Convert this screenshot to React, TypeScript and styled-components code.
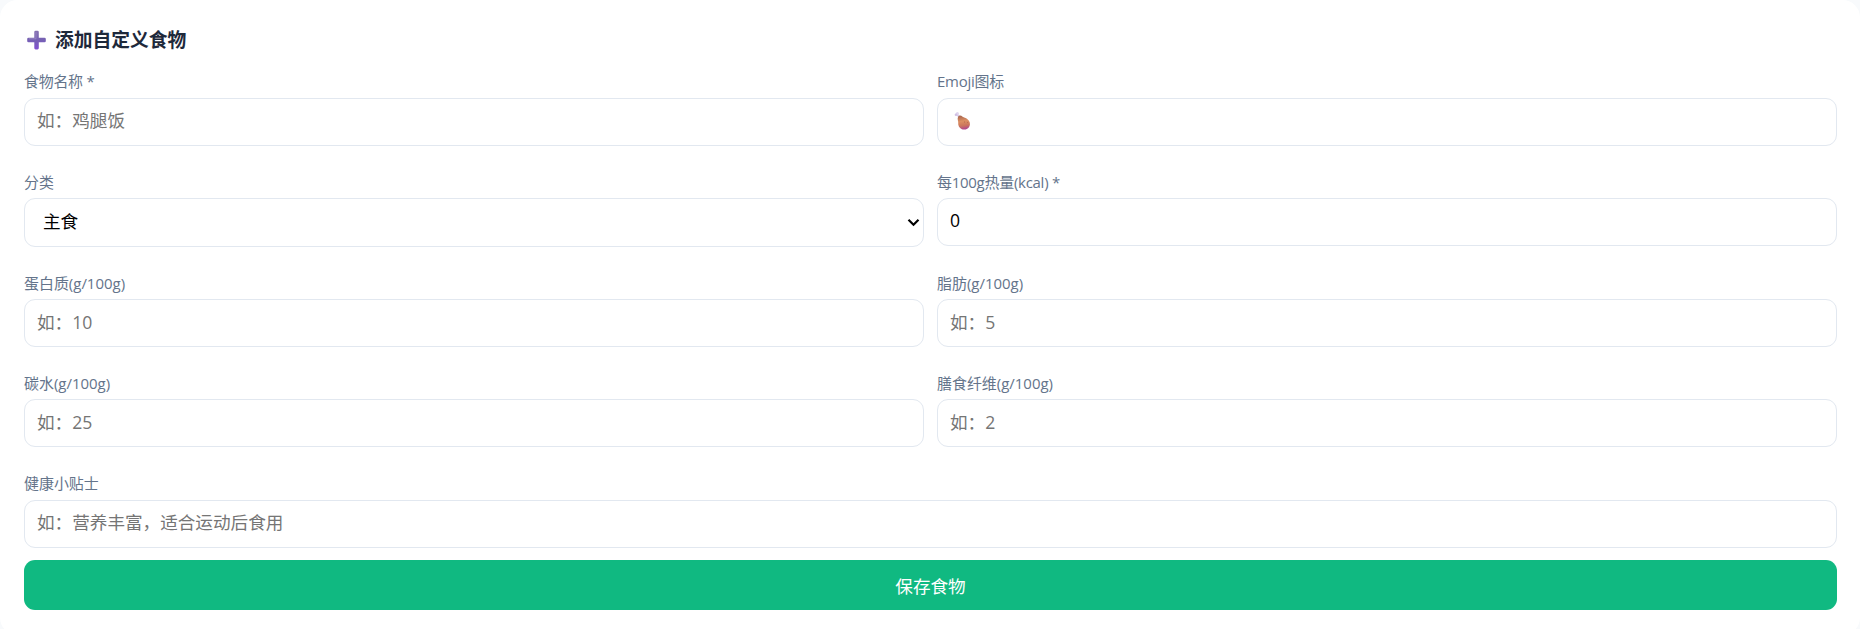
import * as React from "react";
import styled, { createGlobalStyle } from "styled-components";

interface FieldProps {
  label: string;
  tight?: boolean;
  wide?: boolean;
  low?: boolean;
  children: React.ReactNode;
}

const fontStack = `"Open Sans", "Noto Sans CJK SC", sans-serif`;

const GlobalStyle = createGlobalStyle`
  * {
    box-sizing: border-box;
  }
  body {
    margin: 0;
    background: #f8fafc;
    font-family: ${fontStack};
  }
`;

const Page = styled.main`
  height: 629px;
  overflow: hidden;
`;

const Card = styled.section`
  height: 635px;
  padding: 24px 23px 24px 24px;
  border-radius: 17.6px;
  background: #ffffff;
`;

const Title = styled.h3`
  display: flex;
  align-items: center;
  gap: 9px;
  height: 32px;
  margin: 0 0 12px;
  padding-left: 3px;
  color: #1e293b;
  font-size: 18.75px;
  font-weight: 700;
  line-height: 32px;
`;

const Form = styled.form`
  display: grid;
  grid-template-columns: 1fr 1fr;
  grid-template-rows: 100px 101px 100px 101px 90px 50px;
  column-gap: 13px;
`;

const Field_wrapper = styled.div<{ $wide?: boolean }>`
  display: flex;
  flex-direction: column;
  grid-column: ${p => (p.$wide ? "1 / -1" : "auto")};
`;

const Field_label = styled.label<{ $tight?: boolean; $low?: boolean }>`
  height: 30px;
  color: #64748b;
  font-size: 14.96px;
  line-height: ${p => (p.$low ? "28px" : "26px")};
  letter-spacing: ${p => (p.$tight ? "-0.25px" : "normal")};
`;

const Input = styled.input`
  width: 100%;
  height: 48px;
  padding: 0 12px 4px;
  border: 1px solid #e2e8f0;
  border-radius: 11px;
  outline: none;
  background: #ffffff;
  color: #000000;
  font-family: ${fontStack};
  font-size: 17.6px;
  &::placeholder {
    color: #757575;
  }
  &[type="number"]:placeholder-shown {
    padding-bottom: 2px;
  }
`;

const EmojiBox = styled.div`
  display: flex;
  align-items: center;
  height: 48px;
  padding: 0 16px 2px;
  border: 1px solid #e2e8f0;
  border-radius: 11px;
`;

const SelectBox = styled.div`
  display: flex;
  align-items: center;
  height: 49px;
  padding-right: 3px;
  border: 1px solid #e2e8f0;
  border-radius: 11px;
`;

const Select = styled.select`
  flex: 1;
  height: 100%;
  padding: 0 0 4px 18px;
  appearance: none;
  border: none;
  outline: none;
  background: transparent;
  color: #000000;
  font-family: ${fontStack};
  font-size: 17.6px;
`;

const SaveButton = styled.button`
  grid-column: 1 / -1;
  padding: 1px 0 0;
  border: none;
  border-radius: 11px;
  background: #10b981;
  color: #ffffff;
  font-family: ${fontStack};
  font-size: 17.6px;
  font-weight: 400;
`;

const PlusIcon = () => (
  <svg width="19" height="20" viewBox="0 0 19 20">
    <defs>
      <linearGradient id="plus" x1="0" y1="0" x2="0" y2="1">
        <stop offset="0" stopColor="#8571b0" />
        <stop offset="0.5" stopColor="#7560b3" />
        <stop offset="1" stopColor="#8251d2" />
      </linearGradient>
    </defs>
    <path
      d="M8.6.7h1.9q1.3 0 1.3 1.3v5.7h5.7q1.3 0 1.3 1.3v1.9q0 1.3-1.3 1.3h-5.7v5.9q0 1.3-1.3 1.3H8.6q-1.3 0-1.3-1.3v-5.9H1.5q-1.3 0-1.3-1.3V9q0-1.3 1.3-1.3h5.8V2q0-1.3 1.3-1.3Z"
      fill="url(#plus)"
    />
    <path d="M9 2v6.8H2" fill="none" stroke="#9c8bc4" strokeWidth=".8" />
  </svg>
);

const DrumstickIcon = () => (
  <svg width="18" height="20" viewBox="0 0 18 20">
    <defs>
      <linearGradient id="meat" x1="0.3" y1="0" x2="0.45" y2="1">
        <stop offset="0" stopColor="#a9674f" />
        <stop offset="0.4" stopColor="#dc8f63" />
        <stop offset="0.72" stopColor="#cb765c" />
        <stop offset="1" stopColor="#b04592" />
      </linearGradient>
    </defs>
    <path d="M3 3.5 5.5 6" stroke="#d9cbe8" strokeWidth="2" />
    <circle cx="3.4" cy="2.4" r="1.5" fill="#dfd4ee" />
    <circle cx="2" cy="3.7" r="1.3" fill="#cfc0e5" />
    <path
      d="M4.2 5.4C5.6 4 7.3 4.7 8.6 5.8c1.2 1 3.2 1.1 4.9 2.4 2.3 1.8 3.1 4.6 2 7-1.2 2.8-4.7 4.1-7.6 3C5.1 17.1 3.9 14.3 4.2 11.6 4.4 9.7 2.9 7.6 4.2 5.4Z"
      fill="url(#meat)"
    />
    <path d="M10 11h1M13 11.5h.8" stroke="#a95e45" strokeWidth=".7" />
  </svg>
);

const Chevron = () => (
  <svg width="13" height="9" viewBox="0 0 13 9" fill="none">
    <path d="M1.5 1.7 6.5 6.7 11.5 1.7" stroke="#000000" strokeWidth="2.2" />
  </svg>
);

const Field = ({ label, tight, wide, low, children }: FieldProps) => (
  <Field_wrapper $wide={wide}>
    <Field_label $tight={tight} $low={low}>
      {label}
    </Field_label>
    {children}
  </Field_wrapper>
);

const App = () => (
  <>
    <GlobalStyle />
    <Page>
      <Card>
        <Title>
          <PlusIcon />
          添加自定义食物
        </Title>
        <Form onSubmit={e => e.preventDefault()}>
          <Field label="食物名称 *" tight>
            <Input placeholder="如：鸡腿饭" />
          </Field>
          <Field label="Emoji图标" tight>
            <EmojiBox>
              <DrumstickIcon />
            </EmojiBox>
          </Field>
          <Field label="分类" low>
            <SelectBox>
              <Select defaultValue="主食">
                <option>主食</option>
              </Select>
              <Chevron />
            </SelectBox>
          </Field>
          <Field label="每100g热量(kcal) *" tight low>
            <Input type="number" defaultValue="0" />
          </Field>
          <Field label="蛋白质(g/100g)" low>
            <Input type="number" placeholder="如：10" />
          </Field>
          <Field label="脂肪(g/100g)" low>
            <Input type="number" placeholder="如：5" />
          </Field>
          <Field label="碳水(g/100g)" low>
            <Input type="number" placeholder="如：25" />
          </Field>
          <Field label="膳食纤维(g/100g)" low>
            <Input type="number" placeholder="如：2" />
          </Field>
          <Field label="健康小贴士" wide>
            <Input placeholder="如：营养丰富，适合运动后食用" />
          </Field>
          <SaveButton type="submit">保存食物</SaveButton>
        </Form>
      </Card>
    </Page>
  </>
);

export default App;
